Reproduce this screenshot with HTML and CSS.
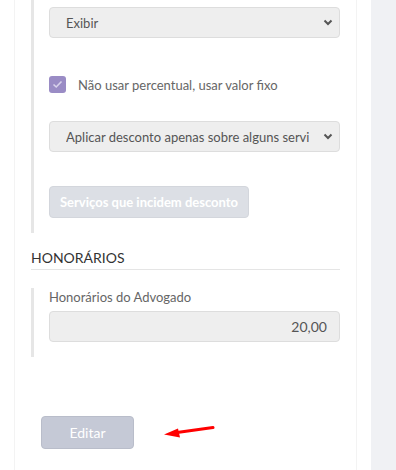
FILE: index.html
```html
<!DOCTYPE html>
<html lang="pt-BR">
<head>
    <meta charset="UTF-8">
    <meta name="viewport" content="width=device-width, initial-scale=1.0">
    <title>Honorários</title>
    <link rel="stylesheet" href="styles.css">
</head>
<body>
    <div class="page">
        <div class="column">
            <div class="group">
                <div class="select">
                    <span class="select-text">Exibir</span>
                    <svg class="chevron" width="10" height="7" viewBox="0 0 10 7"><path d="M1.5 1.5 L5 5 L8.5 1.5" fill="none" stroke="#555" stroke-width="2"/></svg>
                </div>

                <label class="check-row">
                    <span class="checkbox">
                        <svg width="11" height="9" viewBox="0 0 11 9"><path d="M1.5 4.5 L4.2 7 L9.5 1.5" fill="none" stroke="#d9d3ec" stroke-width="1.6"/></svg>
                    </span>
                    <span class="check-label">Não usar percentual, usar valor fixo</span>
                </label>

                <div class="select select-second">
                    <span class="select-text">Aplicar desconto apenas sobre alguns serviços</span>
                    <svg class="chevron" width="10" height="7" viewBox="0 0 10 7"><path d="M1.5 1.5 L5 5 L8.5 1.5" fill="none" stroke="#555" stroke-width="2"/></svg>
                </div>

                <button class="btn-light">Serviços que incidem desconto</button>
            </div>

            <h3 class="section-title">HONORÁRIOS</h3>

            <div class="group group-fees">
                <div class="field-label">Honorários do Advogado</div>
                <div class="input">20,00</div>
            </div>

            <div class="actions">
                <button class="btn-edit">Editar</button>
                <svg class="arrow" width="52" height="14" viewBox="0 0 52 14">
                    <path d="M50 1.5 L14 6.5" stroke="#f00" stroke-width="3" stroke-linecap="round"/>
                    <polygon points="1,8.5 15,2.5 17,11.5" fill="#f00"/>
                </svg>
            </div>
        </div>
    </div>
</body>
</html>
```

FILE: styles.css
```css
html, body {
    margin: 0;
    padding: 0;
    height: 100%;
    overflow: hidden;
}

body {
    font-family: Lato, "Open Sans", Arial, sans-serif;
    font-size: 13px;
    color: #666;
    background-color: #f0f1f4;
}

.page {
    width: 371px;
    height: 470px;
    background-color: #fff;
}

.column {
    position: relative;
    margin-left: 14px;
    width: 343px;
    height: 470px;
    border-left: 1px solid #f3f3f3;
    border-right: 1px solid #f3f3f3;
    padding: 0 16px;
    box-sizing: border-box;
}

.group {
    border-left: 3px solid #e6e6e6;
    padding: 7px 0 15px 15px;
}

.select {
    display: flex;
    align-items: center;
    height: 31px;
    box-sizing: border-box;
    background-color: #eee;
    border: 1px solid #ddd;
    border-radius: 4px;
    padding: 0 6px 0 16px;
    color: #555;
    font-size: 13px;
}

.select-text {
    flex: 1;
    white-space: nowrap;
    overflow: hidden;
    margin-right: 14px;
}

.chevron {
    flex: none;
}

.check-row {
    display: flex;
    align-items: center;
    margin-top: 38px;
    height: 17px;
}

.checkbox {
    display: flex;
    align-items: center;
    justify-content: center;
    width: 17px;
    height: 17px;
    border-radius: 3px;
    background-color: #9a8cc5;
}

.check-label {
    margin-left: 12px;
    color: #666;
    font-size: 13px;
}

.select-second {
    margin-top: 28px;
}

.btn-light {
    display: block;
    margin-top: 34px;
    height: 32px;
    width: 200px;
    padding: 0;
    border: 1px solid #d3d6dc;
    border-radius: 4px;
    background-color: #dcdfe5;
    color: #fff;
    font-family: inherit;
    font-size: 13px;
    font-weight: bold;
}

.section-title {
    margin: 17px 0 0 0;
    padding-bottom: 3px;
    border-bottom: 1px solid #e5e5e5;
    font-size: 14px;
    font-weight: normal;
    color: #333;
    line-height: 16px;
}

.group-fees {
    margin-top: 18px;
    padding-top: 1px;
    padding-bottom: 15px;
}

.field-label {
    font-size: 13px;
    color: #666;
    line-height: 16px;
}

.input {
    margin-top: 6px;
    height: 31px;
    box-sizing: border-box;
    background-color: #eee;
    border: 1px solid #ddd;
    border-radius: 4px;
    padding: 0 12px;
    line-height: 29px;
    font-size: 14px;
    text-align: right;
    color: #555;
}

.actions {
    position: relative;
    margin-top: 59px;
    margin-left: 10px;
}

.btn-edit {
    display: block;
    width: 93px;
    height: 33px;
    padding: 0;
    border: 1px solid #b9bdca;
    border-radius: 4px;
    background-color: #c5c9d6;
    color: #fff;
    font-family: inherit;
    font-size: 14px;
}

.arrow {
    position: absolute;
    left: 122px;
    top: 10px;
}
```
